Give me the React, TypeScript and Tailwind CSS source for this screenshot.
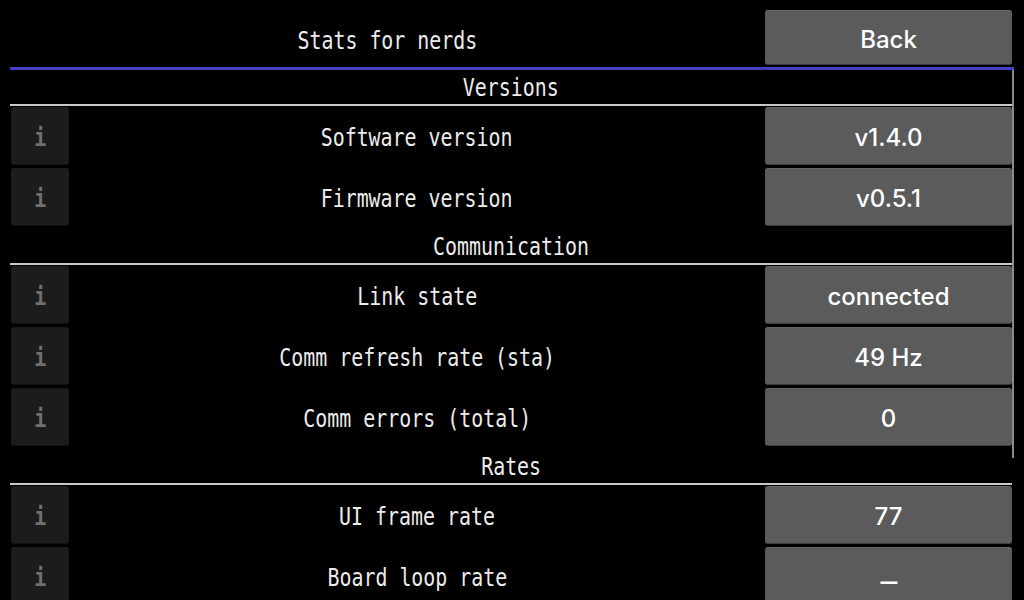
import React from 'react';

interface StatRow {
    label: string;
    value: string;
}

interface StatSection {
    title: string;
    rows: StatRow[];
}

const sections: StatSection[] = [
    {
        title: 'Versions',
        rows: [
            { label: 'Software version', value: 'v1.4.0' },
            { label: 'Firmware version', value: 'v0.5.1' },
        ],
    },
    {
        title: 'Communication',
        rows: [
            { label: 'Link state', value: 'connected' },
            { label: 'Comm refresh rate (sta)', value: '49 Hz' },
            { label: 'Comm errors (total)', value: '0' },
        ],
    },
    {
        title: 'Rates',
        rows: [
            { label: 'UI frame rate', value: '77' },
            { label: 'Board loop rate', value: '' },
        ],
    },
];

const mono = "font-['DejaVu_Sans_Mono',monospace]";
const sans = "font-['Inter','Liberation_Sans',sans-serif]";

// narrow monospace label, squeezed to match the condensed terminal face
const MonoText: React.FC<{ children: React.ReactNode; className?: string }> = ({ children, className = '' }) => (
    <span className={`inline-block whitespace-nowrap scale-x-[0.83] text-[24px] leading-none ${mono} ${className}`}>
        {children}
    </span>
);

const buttonBase = `flex items-center justify-center rounded-[3px] bg-[#5b5b5b] border-t border-t-[#676767] border-b border-b-[#3c3c3c] text-white text-[24px] font-medium ${sans}`;

const ValueButton: React.FC<{ value: string }> = ({ value }) => (
    <button className={`w-[247px] h-[58px] shrink-0 pt-[4px] ${buttonBase}`}>
        {value === '' ? (
            // no reading yet: a wide dash sitting a bit low
            <span className="inline-block scale-x-[1.4] translate-y-[4px] font-semibold">–</span>
        ) : (
            value
        )}
    </button>
);

const InfoButton: React.FC = () => (
    <button className="ml-px w-[58px] h-[58px] shrink-0 flex items-center justify-center pt-[4px] rounded-[3px] bg-[#1c1c1c] border-b border-b-[#121212]">
        <MonoText className="text-[#707070] font-bold">i</MonoText>
    </button>
);

export default function App() {
    return (
        <div className="w-[1024px] h-[600px] overflow-hidden bg-black text-[#ececec] px-[10px]">
            {/* header */}
            <div className="flex items-center pt-[10px] pr-[2px]">
                <div className="flex-1 flex justify-center pt-[6px]">
                    <MonoText>Stats for nerds</MonoText>
                </div>
                <button className={`w-[247px] h-[55px] pt-[4px] ${buttonBase}`}>Back</button>
            </div>
            <div className="mt-[2px] h-[3px] bg-[#4141c2]" />

            <div className="flex">
                <div className="flex-1 flex flex-col">
                    {sections.map(section => (
                        <div key={section.title} className="flex flex-col">
                            <div className="h-[34px] flex items-center justify-center pt-[2px]">
                                <MonoText>{section.title}</MonoText>
                            </div>
                            <div className="h-[2px] bg-[#c9c9c9]" />
                            <div className="flex flex-col gap-[3px] pt-px pb-[3px]">
                                {section.rows.map(row => (
                                    <div key={row.label} className="flex items-center">
                                        <InfoButton />
                                        <div className="flex-1 flex justify-center pt-[4px]">
                                            <MonoText>{row.label}</MonoText>
                                        </div>
                                        <ValueButton value={row.value} />
                                    </div>
                                ))}
                            </div>
                        </div>
                    ))}
                </div>
                {/* scrollbar */}
                <div className="w-[2px] shrink-0">
                    <div className="h-[388px] bg-[#8a8a8a]" />
                </div>
            </div>
        </div>
    );
}
